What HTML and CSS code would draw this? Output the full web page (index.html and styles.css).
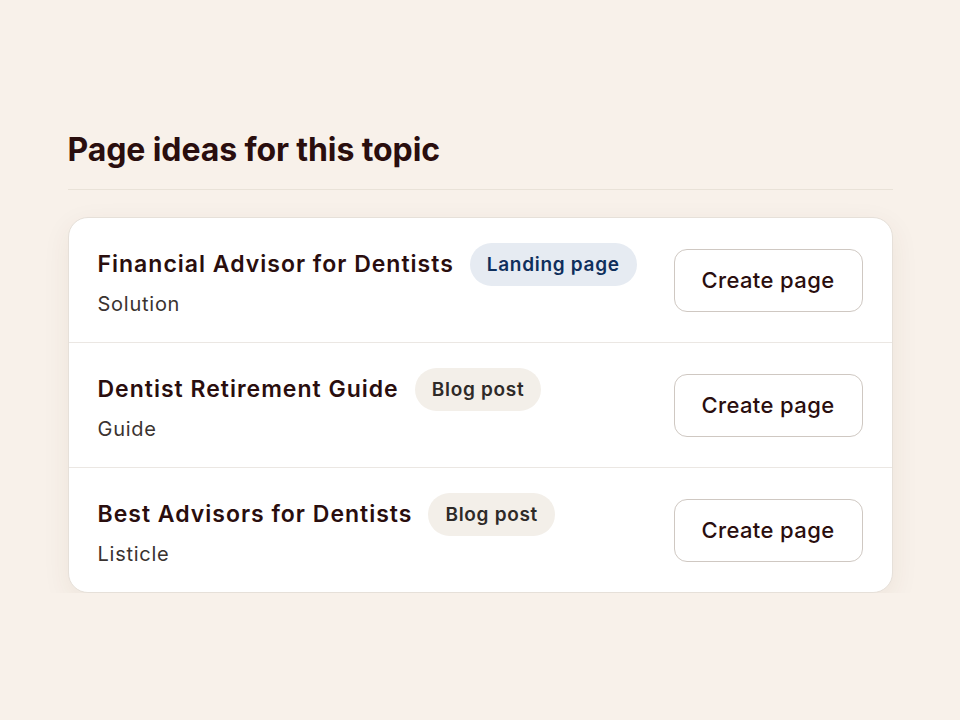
FILE: index.html
```html
<!DOCTYPE html>
<html lang="en">
<head>
<meta charset="utf-8">
<link rel="stylesheet" href="styles.css">
</head>
<body>
<main class="wrap">
  <h1 class="heading">Page ideas for this topic</h1>
  <hr class="divider">
  <section class="card">
    <div class="row">
      <div class="info">
        <div class="title-line">
          <span class="title">Financial Advisor for Dentists</span>
          <span class="badge badge-blue">Landing page</span>
        </div>
        <div class="sub">Solution</div>
      </div>
      <button class="btn">Create page</button>
    </div>
    <div class="row">
      <div class="info">
        <div class="title-line">
          <span class="title">Dentist Retirement Guide</span>
          <span class="badge badge-beige">Blog post</span>
        </div>
        <div class="sub">Guide</div>
      </div>
      <button class="btn">Create page</button>
    </div>
    <div class="row">
      <div class="info">
        <div class="title-line">
          <span class="title">Best Advisors for Dentists</span>
          <span class="badge badge-beige">Blog post</span>
        </div>
        <div class="sub">Listicle</div>
      </div>
      <button class="btn">Create page</button>
    </div>
  </section>
</main>
</body>
</html>
```

FILE: styles.css
```css
html, body {
  margin: 0;
  padding: 0;
}
body {
  background: #f8f1ea;
  font-family: "Inter", "Noto Sans", sans-serif;
  color: #2a0e0e;
}
.wrap {
  width: 825px;
  margin: 0 auto;
  padding-top: 128px;
}
.heading {
  margin: 0;
  font-size: 32px;
  font-weight: 700;
  line-height: 44px;
  letter-spacing: -0.1px;
  color: #2a0e0e;
}
.divider {
  margin: 17px 0 27px;
  border: 0;
  border-top: 1px solid #e9e2d8;
  height: 0;
}
.card {
  background: #ffffff;
  border: 1px solid #e6e0d9;
  border-radius: 20px;
  box-shadow: 0 8px 28px rgba(90, 60, 30, 0.07);
  overflow: hidden;
}
.row {
  height: 124px;
  display: flex;
  align-items: center;
  justify-content: space-between;
  padding: 0 29px;
  border-top: 1px solid #ebe7e3;
}
.row:first-child {
  border-top: 0;
}
.info {
  display: flex;
  flex-direction: column;
  gap: 6px;
  margin-top: -2px;
}
.title-line {
  display: flex;
  align-items: center;
  gap: 16px;
}
.title {
  font-size: 23px;
  font-weight: 600;
  letter-spacing: 1px;
  color: #2a0e0e;
}
.badge {
  font-size: 19px;
  font-weight: 600;
  letter-spacing: 0.7px;
  height: 43px;
  padding: 0 17px;
  border-radius: 22px;
  display: inline-flex;
  align-items: center;
}
.badge-blue {
  background: #e6ebf2;
  color: #0f2f5c;
}
.badge-beige {
  background: #f3efe9;
  color: #2e2a28;
}
.sub {
  font-size: 20px;
  font-weight: 400;
  letter-spacing: 0.75px;
  color: #3a3330;
}
.btn {
  width: 189px;
  height: 63px;
  border: 1px solid #cfc8c2;
  border-radius: 13px;
  background: #ffffff;
  font-family: inherit;
  font-size: 22px;
  font-weight: 500;
  letter-spacing: 0.4px;
  color: #2a0e0e;
}
```
